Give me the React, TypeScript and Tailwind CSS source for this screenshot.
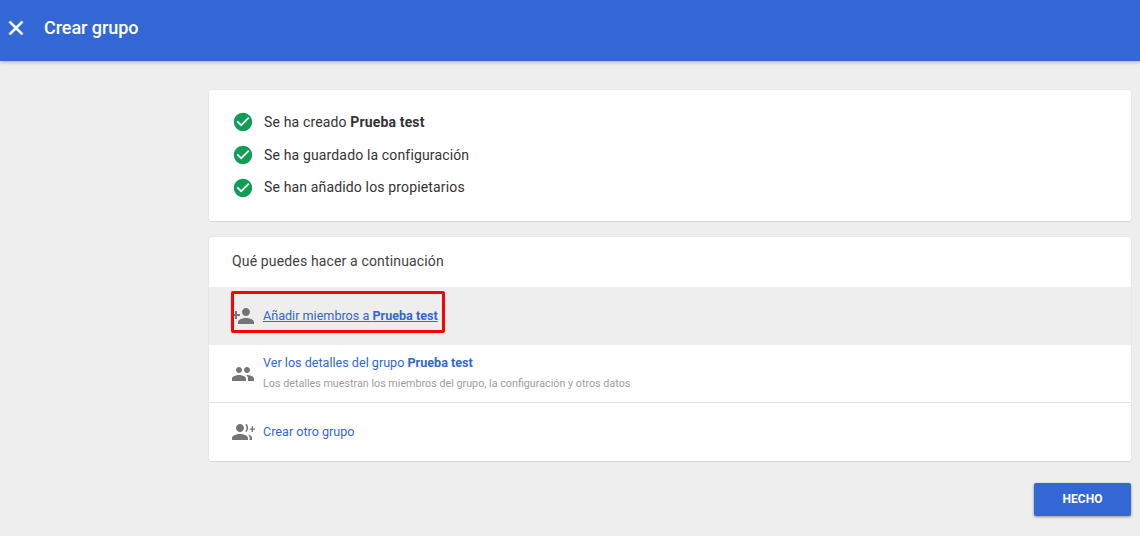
import { ReactNode } from 'react';

function Icon({ d, className }: { d: string; className?: string }) {
  return (
    <svg viewBox="0 0 24 24" fill="currentColor" className={className}>
      <path d={d} />
    </svg>
  );
}

const CHECK_CIRCLE = 'M12 2C6.48 2 2 6.48 2 12s4.48 10 10 10 10-4.48 10-10S17.52 2 12 2zm-2 15l-5-5 1.41-1.41L10 14.17l7.59-7.59L19 8l-9 9z';
const CLOSE = 'M19 6.41L17.59 5 12 10.59 6.41 5 5 6.41 10.59 12 5 17.59 6.41 19 12 13.41 17.59 19 19 17.59 13.41 12z';
const PERSON_ADD = 'M15 12c2.21 0 4-1.79 4-4s-1.79-4-4-4-4 1.79-4 4 1.79 4 4 4zm-9-2V7H4v3H1v2h3v3h2v-3h3v-2H6zm9 4c-2.67 0-8 1.34-8 4v2h16v-2c0-2.66-5.33-4-8-4z';
const PEOPLE = 'M16 11c1.66 0 2.99-1.34 2.99-3S17.66 5 16 5c-1.66 0-3 1.34-3 3s1.34 3 3 3zm-8 0c1.66 0 2.99-1.34 2.99-3S9.66 5 8 5C6.34 5 5 6.34 5 8s1.34 3 3 3zm0 2c-2.33 0-7 1.17-7 3.5V19h14v-2.5c0-2.33-4.67-3.5-7-3.5zm8 0c-.29 0-.62.02-.97.05 1.16.84 1.97 1.97 1.97 3.45V19h6v-2.5c0-2.33-4.67-3.5-7-3.5z';
const GROUP_PLUS = 'M9 12c2.21 0 4-1.79 4-4s-1.79-4-4-4-4 1.79-4 4 1.79 4 4 4zm0 2c-2.67 0-8 1.34-8 4v2h16v-2c0-2.66-5.33-4-8-4zm6.3-10.2c2.4 1.9 2.4 6.5 0 8.4l-.9-.9c1.6-1.7 1.6-4.9 0-6.6l.9-.9zM22 6.2v2.2h2v1.3h-2v2.2h-1.4V9.7h-2V8.4h2V6.2H22zM18.6 20v-2.2c0-1.3-.6-2.4-1.7-3.3 2 .4 4.1 1.3 4.1 3.3V20h-2.4z';

function Done({ children }: { children: ReactNode }) {
  return (
    <div className="flex items-center h-[32.7px]">
      <Icon d={CHECK_CIRCLE} className="w-[22px] h-[22px] text-[#0f9d58] ml-[-1px] mr-[10px] shrink-0" />
      <span className="text-[14px] tracking-[0.15px] text-[#333333]">{children}</span>
    </div>
  );
}

export default function App() {
  return (
    <div className="w-[1140px] h-[536px] overflow-hidden bg-[#eeeeee] text-[14px]" style={{ fontFamily: 'Roboto, "Liberation Sans", sans-serif' }}>
      <header className="h-[61px] bg-[#3367d6] flex items-center pb-[5px] shadow-[0_1px_4px_rgba(0,0,0,0.3)] text-white relative">
        <Icon d={CLOSE} className="w-[24px] h-[24px] ml-[4px] mr-[16px] stroke-white stroke-[0.7]" />
        <h1 className="text-[18px] font-medium tracking-[-0.05px] leading-none">Crear grupo</h1>
      </header>

      <main className="ml-[209px] w-[922px] pt-[29px]">
        <section className="h-[131px] bg-white rounded-[2px] shadow-[0_0_1px_rgba(0,0,0,0.2),0_1px_1px_rgba(0,0,0,0.08)] px-[24px] pt-[16px]">
          <Done>Se ha creado <b className="font-bold">Prueba test</b></Done>
          <Done>Se ha guardado la configuración</Done>
          <Done>Se han añadido los propietarios</Done>
        </section>

        <section className="mt-[16px] h-[224px] bg-white rounded-[2px] shadow-[0_0_1px_rgba(0,0,0,0.2),0_1px_1px_rgba(0,0,0,0.08)]">
          <div className="h-[50px] flex items-center pl-[23px] pb-[2px] text-[14px] tracking-[0.15px] text-[#424242]">
            Qué puedes hacer a continuación
          </div>

          <a className="relative h-[58px] bg-[#eeeeee] flex items-center pl-[22px]">
            <Icon d={PERSON_ADD} className="w-[24px] h-[24px] text-[#757575] mr-[8px] shrink-0" />
            <span className="text-[12.6px] text-[#3367d6] underline">
              Añadir miembros a <b className="font-bold">Prueba test</b>
            </span>
            <span className="absolute left-[22px] top-[4px] w-[214px] h-[42px] border-[3px] border-[#ff0000] rounded-[2px]" />
          </a>

          <a className="h-[57px] flex items-center pl-[22px] border-b border-[#e0e0e0] box-content">
            <Icon d={PEOPLE} className="w-[24px] h-[24px] text-[#757575] mr-[8px] shrink-0" />
            <span className="flex flex-col pb-[2px]">
              <span className="text-[12.6px] leading-[18px] text-[#3367d6]">
                Ver los detalles del grupo <b className="font-bold">Prueba test</b>
              </span>
              <span className="text-[10.75px] leading-[16px] mt-[4px] text-[#9e9e9e]">
                Los detalles muestran los miembros del grupo, la configuración y otros datos
              </span>
            </span>
          </a>

          <a className="h-[58px] flex items-center pl-[22px]">
            <Icon d={GROUP_PLUS} className="w-[24px] h-[24px] text-[#757575] mr-[8px] shrink-0" />
            <span className="text-[12.6px] text-[#3367d6]">Crear otro grupo</span>
          </a>
        </section>

        <div className="flex justify-end mt-[22px]">
          <button className="w-[97px] h-[33px] bg-[#3367d6] text-white text-[12px] font-bold rounded-[2px] pb-[2px] shadow-[0_1px_3px_rgba(0,0,0,0.4)]">
            HECHO
          </button>
        </div>
      </main>
    </div>
  );
}
